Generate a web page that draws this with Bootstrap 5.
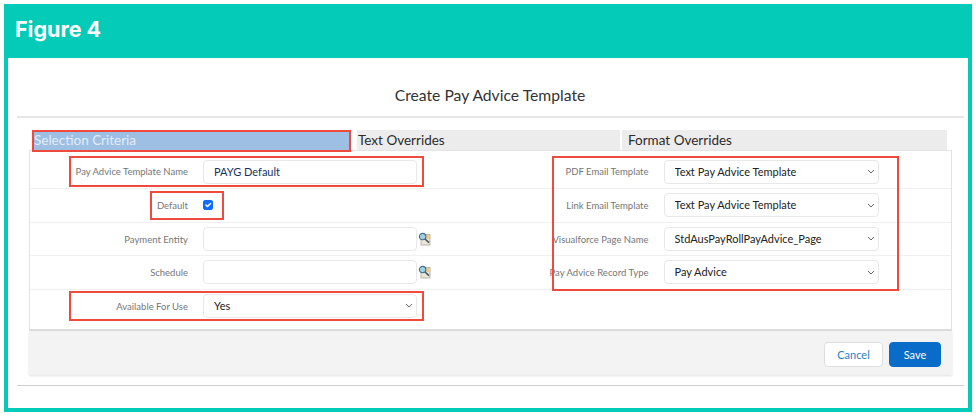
<!DOCTYPE html>
<html lang="en">
<head>
<meta charset="utf-8">
<title>Figure 4</title>
<link rel="stylesheet" href="https://cdn.jsdelivr.net/npm/bootstrap@5.3.0/dist/css/bootstrap.min.css">
<style>
html,body{height:416px;overflow:hidden;background:#fff;font-family:"Lato","Noto Sans",sans-serif}
.frame{margin:4px;height:408px;background:#04cbb8}
.frame-head{height:54px;padding:13px 0 0 11px;font:700 21.5px/24px "Inter","Open Sans",sans-serif;color:#fff}
.sheet{position:relative;margin:0 4px;height:350px;background:#fff;padding-top:26px}
.sheet-title{font-size:15.7px;line-height:22px;color:#333;text-align:center;margin:0 0 10px;font-weight:400;padding-left:4px}
.rule{height:2px;background:#e6e6e6;margin:0 4px 0 9px}
.tab-strip{margin:12px 21px 0 25px;height:20px}
.tab-item{font-size:13.5px;line-height:20px;height:20px;color:#2b2b2b;background:#edecec;padding-left:1px;white-space:nowrap}
.tab-on{width:317px;background:#9dbfe3;color:#e3edf8;margin-right:7px}
.tab-mid{width:263px;margin-right:2px}
.tab-end{width:325px;padding-left:6px}
.form-panel{margin:0 16px 0 21px;height:181px;border:1px solid #e4e4e4;border-bottom:2px solid #dcdcdc;background:#fff;padding-top:1px}
.line{border-bottom:1px solid #f0f0f0;height:33.6px;align-items:center}
.line-first{height:37px;padding-top:3px}
.line-last{border-bottom:0;height:32px}
.fld-label{width:158px;text-align:right;font-size:9.5px;color:#767676;white-space:nowrap;padding-top:2px;flex:none}
.fld-control{width:214px;margin-left:15px;flex:none}
.col-6+.col-6 .fld-control{width:215px}
.fld-input,.fld-select{height:24px;min-height:0;font-size:11px;line-height:16px;border:1px solid #e8e8e8;border-radius:4px;padding:2px 22px 2px 10px;color:#222;background-color:#fff;box-shadow:none}
.fld-input{color:#16325c}
.fld-select{background-image:url("data:image/svg+xml,%3csvg xmlns='http://www.w3.org/2000/svg' viewBox='0 0 8 5'%3e%3cpath fill='none' stroke='%23666' stroke-width='1' d='M1 1l3 3 3-3'/%3e%3c/svg%3e");background-size:8px 5px;background-position:right 3px center}
.form-check-input.fld-check[type=checkbox]{width:10px;height:10px;margin:0;border-radius:2px;background-color:#0d6efd;border-color:#0d6efd;background-size:10px;display:block}
.lookup{width:13px;height:14px;margin-left:1px;flex:none}
.panel-foot{margin:0 16px 0 21px;height:44px;background:#f3f3f3;box-shadow:0 1px 2px rgba(0,0,0,.12);padding:11px 11px 0 0}
.act{height:25px;font-size:11px;line-height:14px;padding:0;border-radius:4px}
.act-cancel{width:59px;background:#fff;border:1px solid #dedede;color:#2c80c4;margin-right:6px}
.act-save{width:52px;background:#0a6cc9;border:1px solid #0a6cc9;color:#fff}
.foot-rule{height:1px;background:#cfcfcf;margin:10px 4px 0 9px}
.mark-box{position:absolute;border:2px solid #ee4a3e;pointer-events:none}
.mb-tab{left:24px;top:72px;width:319px;height:22px}
.mb-name{left:61px;top:98px;width:355px;height:31px}
.mb-default{left:142px;top:133px;width:74px;height:29px}
.mb-avail{left:61px;top:233px;width:355px;height:30px}
.mb-right{left:544px;top:98px;width:347px;height:135px}
</style>
</head>
<body class="m-0">
<div class="frame">
  <div class="frame-head">Figure 4</div>
  <div class="sheet">
    <h2 class="sheet-title">Create Pay Advice Template</h2>
    <div class="rule"></div>
    <div class="tab-strip d-flex">
      <div class="tab-item tab-on">Selection Criteria</div>
      <div class="tab-item tab-mid">Text Overrides</div>
      <div class="tab-item tab-end">Format Overrides</div>
    </div>
    <form class="form-panel">
      <div class="row g-0 line line-first">
        <div class="col-6 d-flex align-items-center"><label class="fld-label">Pay Advice Template Name</label><div class="fld-control"><input class="form-control fld-input" value="PAYG Default"></div></div>
        <div class="col-6 d-flex align-items-center"><label class="fld-label">PDF Email Template</label><div class="fld-control"><select class="form-select fld-select"><option>Text Pay Advice Template</option></select></div></div>
      </div>
      <div class="row g-0 line">
        <div class="col-6 d-flex align-items-center"><label class="fld-label">Default</label><div class="fld-control"><input class="form-check-input fld-check" type="checkbox" checked></div></div>
        <div class="col-6 d-flex align-items-center"><label class="fld-label">Link Email Template</label><div class="fld-control"><select class="form-select fld-select"><option>Text Pay Advice Template</option></select></div></div>
      </div>
      <div class="row g-0 line">
        <div class="col-6 d-flex align-items-center"><label class="fld-label">Payment Entity</label><div class="fld-control"><input class="form-control fld-input"></div>
          <svg class="lookup" viewBox="0 0 13 14"><rect x="3" y="2.5" width="9" height="10.5" fill="#ece6d6" stroke="#a9a9a0" stroke-width=".8"/><rect x="8" y="3" width="3.5" height="4" fill="#f2c98a"/><circle cx="4.6" cy="4.6" r="3.2" fill="#9fd0e6" stroke="#3f6f8c" stroke-width="1.1"/><path d="M7 7l4 3.6" stroke="#4b5560" stroke-width="1.6"/></svg></div>
        <div class="col-6 d-flex align-items-center"><label class="fld-label">Visualforce Page Name</label><div class="fld-control"><select class="form-select fld-select"><option>StdAusPayRollPayAdvice_Page</option></select></div></div>
      </div>
      <div class="row g-0 line">
        <div class="col-6 d-flex align-items-center"><label class="fld-label">Schedule</label><div class="fld-control"><input class="form-control fld-input"></div>
          <svg class="lookup" viewBox="0 0 13 14"><rect x="3" y="2.5" width="9" height="10.5" fill="#ece6d6" stroke="#a9a9a0" stroke-width=".8"/><rect x="8" y="3" width="3.5" height="4" fill="#f2c98a"/><circle cx="4.6" cy="4.6" r="3.2" fill="#9fd0e6" stroke="#3f6f8c" stroke-width="1.1"/><path d="M7 7l4 3.6" stroke="#4b5560" stroke-width="1.6"/></svg></div>
        <div class="col-6 d-flex align-items-center"><label class="fld-label">Pay Advice Record Type</label><div class="fld-control"><select class="form-select fld-select"><option>Pay Advice</option></select></div></div>
      </div>
      <div class="row g-0 line line-last">
        <div class="col-6 d-flex align-items-center"><label class="fld-label">Available For Use</label><div class="fld-control"><select class="form-select fld-select"><option>Yes</option></select></div></div>
        <div class="col-6"></div>
      </div>
    </form>
    <div class="panel-foot d-flex justify-content-end">
      <button type="button" class="btn act act-cancel">Cancel</button>
      <button type="button" class="btn act act-save">Save</button>
    </div>
    <div class="foot-rule"></div>
    <div class="mark-box mb-tab"></div>
    <div class="mark-box mb-name"></div>
    <div class="mark-box mb-default"></div>
    <div class="mark-box mb-avail"></div>
    <div class="mark-box mb-right"></div>
  </div>
</div>
<script src="https://cdn.jsdelivr.net/npm/bootstrap@5.3.0/dist/js/bootstrap.bundle.min.js"></script>
</body>
</html>
